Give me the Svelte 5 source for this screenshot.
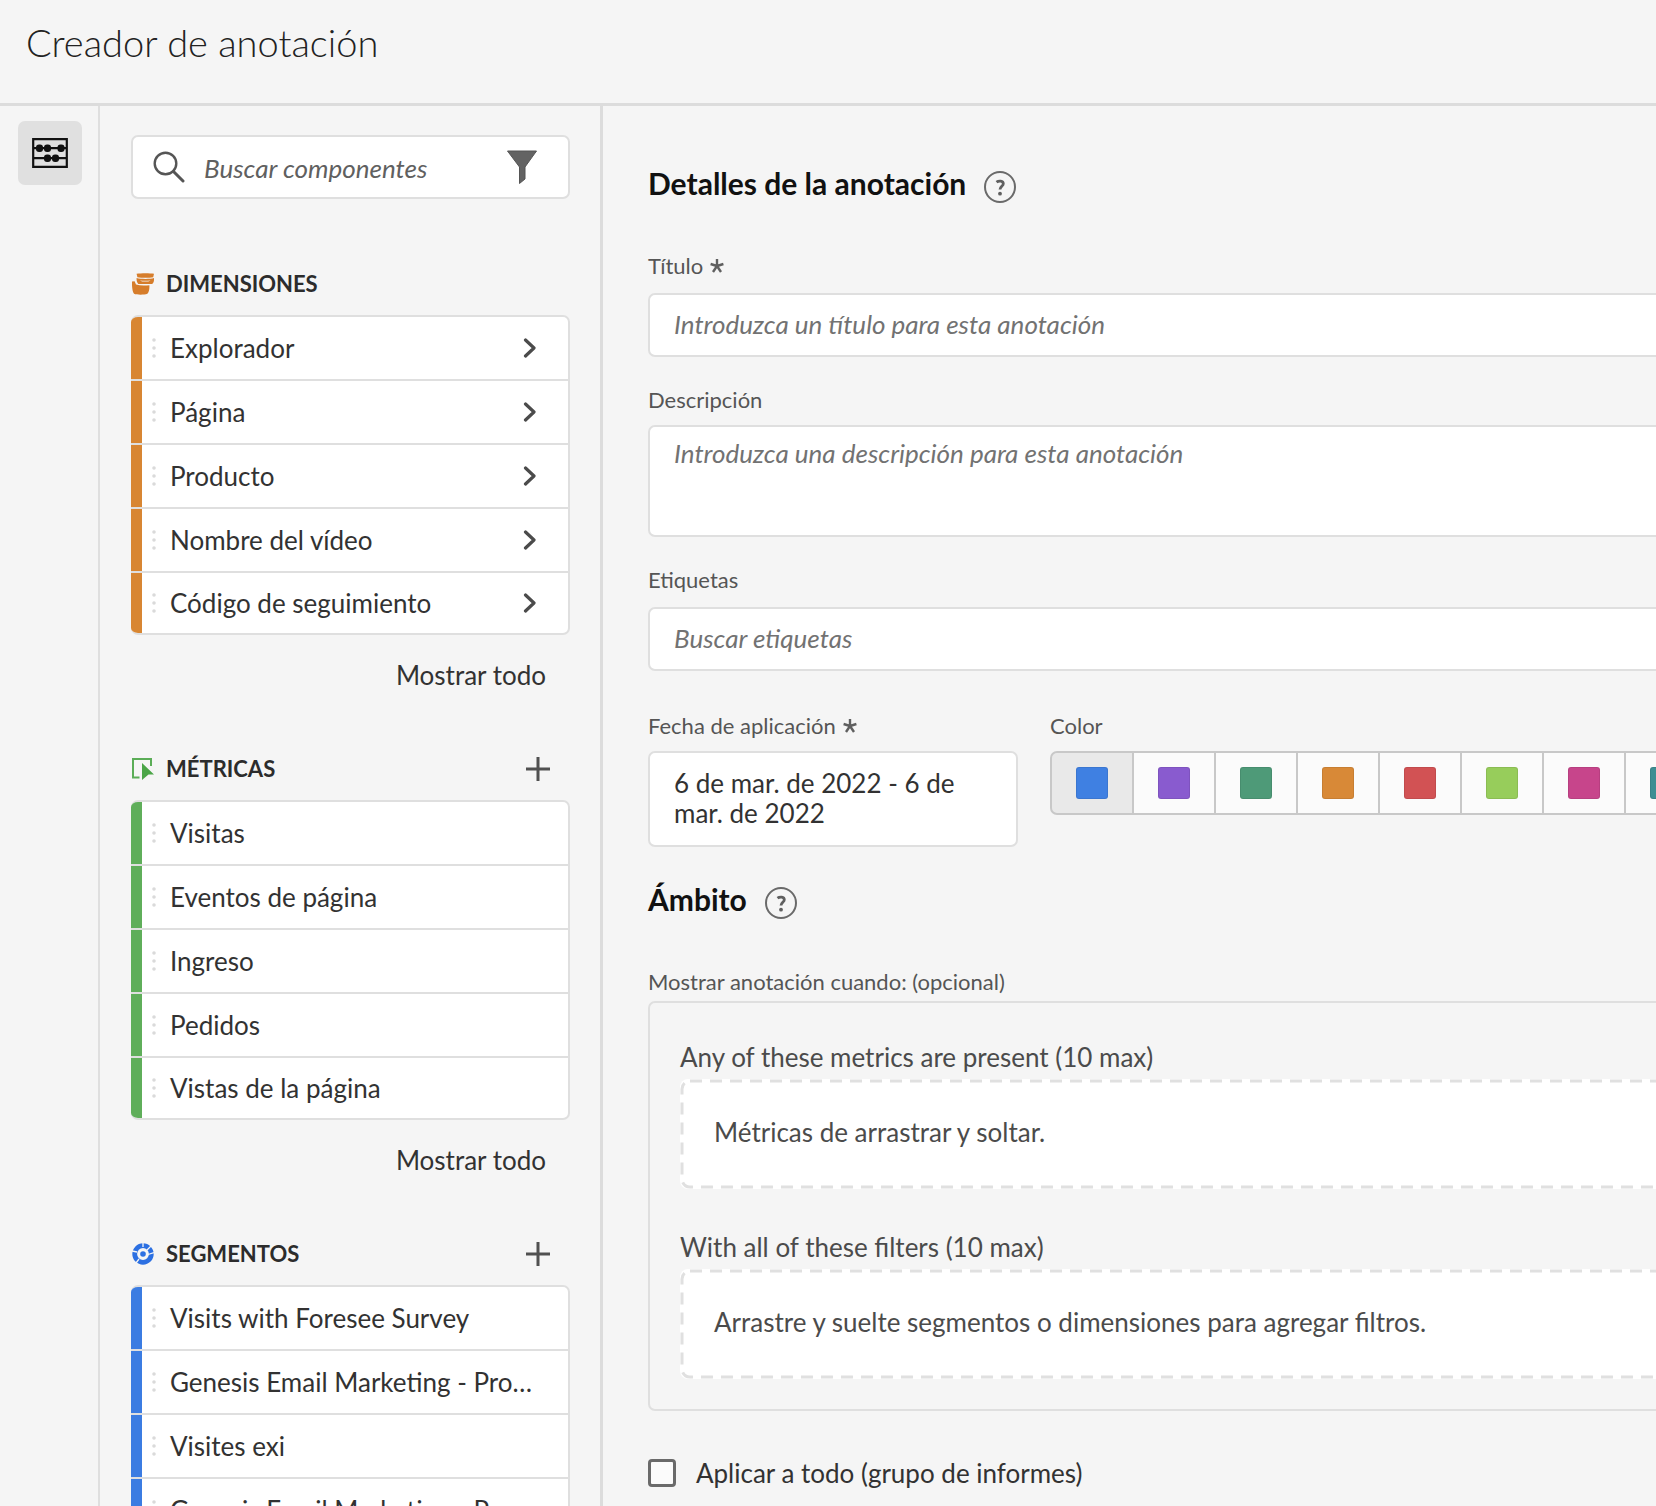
<script>
  let selected = $state('#3f80e2');
  let applyAll = $state(false);

  const groups = [
    {
      id: 'dimensions',
      title: 'DIMENSIONES',
      kind: 'orange',
      nested: true,
      items: ['Explorador', 'Página', 'Producto', 'Nombre del vídeo', 'Código de seguimiento']
    },
    {
      id: 'metrics',
      title: 'MÉTRICAS',
      kind: 'green',
      nested: false,
      items: ['Visitas', 'Eventos de página', 'Ingreso', 'Pedidos', 'Vistas de la página']
    },
    {
      id: 'segments',
      title: 'SEGMENTOS',
      kind: 'blue',
      nested: false,
      items: ['Visits with Foresee Survey', 'Genesis Email Marketing - Pro…', 'Visites exi', 'Genesis Email Marketing - Pr…']
    }
  ];

  const colors = [
    { name: 'Azul', value: '#3f80e2' },
    { name: 'Morado', value: '#895bcf' },
    { name: 'Verde', value: '#4e9a78' },
    { name: 'Naranja', value: '#d88937' },
    { name: 'Rojo', value: '#d25254' },
    { name: 'Lima', value: '#97cd5b' },
    { name: 'Magenta', value: '#c7458b' },
    { name: 'Turquesa', value: '#3d8e93' }
  ];

  const zones = [
    { title: 'Any of these metrics are present (10 max)', hint: 'Métricas de arrastrar y soltar.' },
    { title: 'With all of these filters (10 max)', hint: 'Arrastre y suelte segmentos o dimensiones para agregar filtros.' }
  ];
</script>

{#snippet help(label)}
  <button type="button" class="help" aria-label={label}>
    <svg viewBox="0 0 32 32" width="32" height="32" aria-hidden="true">
      <circle cx="16" cy="16" r="15" fill="none" stroke="#6a6a6a" stroke-width="2" />
      <path d="M12.5 11.2C14.8 9.4 19.3 9.6 19.3 12.7C19.3 15.2 16 15.5 16 18.6" fill="none" stroke="#5f5f5f" stroke-width="2.8" />
      <circle cx="16" cy="22.7" r="1.9" fill="#5f5f5f" />
    </svg>
  </button>
{/snippet}

{#snippet star()}
  <svg class="star" viewBox="0 0 16 16" width="16" height="16" role="img" aria-label="obligatorio">
    <path d="M8 1V8M8 8L1.6 6M8 8L14.4 6M8 8L4 14M8 8L12 14" fill="none" stroke="#5f5f5f" stroke-width="2.4" />
  </svg>
{/snippet}

<div class="app">
  <header class="top"><h1>Creador de anotación</h1></header>

  <div class="body">
    <nav class="rail" aria-label="Paneles">
      <button type="button" class="tool" aria-label="Componentes" aria-pressed="true">
        <svg viewBox="0 0 36 30" width="36" height="30" aria-hidden="true">
          <path d="M1.2 1.2H34.8V28.8H1.2ZM1.2 10.2H34.8M1.2 20.2H34.8" fill="none" stroke="#111" stroke-width="2.2" />
          <g fill="#111">
            <rect x="4" y="6.6" width="7" height="7.4" rx="3" /><rect x="12" y="6.6" width="7" height="7.4" rx="3" />
            <rect x="25.5" y="6.6" width="7" height="7.4" rx="3" /><rect x="12" y="16.6" width="7" height="7.4" rx="3" />
            <rect x="20" y="16.6" width="7" height="7.4" rx="3" />
          </g>
        </svg>
      </button>
    </nav>

    <aside class="side">
      <div class="search">
        <svg viewBox="0 0 32 32" width="32" height="32" aria-hidden="true">
          <circle cx="12.5" cy="12.5" r="10.8" fill="none" stroke="#555" stroke-width="2.4" />
          <path d="M20.5 20.5L30 30" stroke="#555" stroke-width="3" stroke-linecap="round" />
        </svg>
        <input type="text" placeholder="Buscar componentes" aria-label="Buscar componentes" />
        <button type="button" class="filter" aria-label="Filtrar">
          <svg viewBox="0 0 30 34" width="30" height="34" aria-hidden="true">
            <path d="M0.5 1H29.5L18 17V29L12.5 33.5V17Z" fill="#636363" stroke="#555" />
          </svg>
        </button>
      </div>

      {#each groups as g (g.id)}
        <section class="group {g.kind}">
          <div class="group-head">
            {#if g.id === 'dimensions'}
              <svg viewBox="0 0 22 22" width="22" height="22" aria-hidden="true" fill="#d67d2b">
                <path d="M4.6 0.8C9 0 18 0 22 0.8L21.2 4.2C17 5 10 5 5.4 4.2Z" />
                <path fill-rule="evenodd" d="M4.6 5C9 6.2 18 6.2 22 5C22.3 7.5 21.6 9.8 20.2 11H6.4C5 9.6 4.4 7.4 4.6 5ZM8 7.4C10 9 16.500 9 18.500 7.400C15 7.900 11 7.900 8 7.400Z" />
                <path d="M0 8.600L2.600 8.200L4 11.600C8 12.800 13 12.800 17.400 12.200C17.600 16 17 19 15.400 20.800C12 22 5 22 2 20.800C0.300 18.600 -0.200 13 0 8.600Z" />
              </svg>
            {:else if g.id === 'metrics'}
              <svg viewBox="0 0 22 22" width="22" height="22" aria-hidden="true">
                <path d="M7.500 19.500H1V1H19V8M5 19.500" fill="none" stroke="#5bad57" stroke-width="2" />
                <path d="M10 5L22 16.500H16.500L10 22Z" fill="#4ba547" />
              </svg>
            {:else}
              <svg viewBox="0 0 22 22" width="22" height="22" aria-hidden="true">
                <circle cx="11" cy="11" r="8.300" fill="none" stroke="#2c70e2" stroke-width="4.800" />
                <path d="M11 4V0M15 7L20 2M16 11.500L22 9.500M7 16L4 20M5 9L0 8" stroke="#f5f5f5" stroke-width="1.300" />
                <circle cx="11" cy="11" r="2.800" fill="#2c70e2" />
              </svg>
            {/if}
            <h2>{g.title}</h2>
            {#if !g.nested}
              <button type="button" class="add" aria-label="Agregar">
                <svg viewBox="0 0 24 24" width="24" height="24" aria-hidden="true">
                  <path d="M12 0V24M0 12H24" stroke="#505050" stroke-width="3" />
                </svg>
              </button>
            {/if}
          </div>
          <ul>
            {#each g.items as item}
              <li>
                <span class="bar"></span>
                <svg class="grip" viewBox="0 0 4 20" width="4" height="20" aria-hidden="true" fill="#dadada">
                  <circle cx="2" cy="2" r="1.800" /><circle cx="2" cy="10" r="1.800" /><circle cx="2" cy="18" r="1.800" />
                </svg>
                <span class="name">{item}</span>
                {#if g.nested}
                  <button type="button" class="open" aria-label="Abrir {item}">
                    <svg viewBox="0 0 14 20" width="14" height="20" aria-hidden="true">
                      <path d="M2.500 2L11 10L2.500 18" fill="none" stroke="#4b4b4b" stroke-width="3.200" stroke-linecap="round" stroke-linejoin="round" />
                    </svg>
                  </button>
                {/if}
              </li>
            {/each}
          </ul>
          <button type="button" class="more">Mostrar todo</button>
        </section>
      {/each}
    </aside>

    <main>
      <form>
        <div class="heading"><h2>Detalles de la anotación</h2>{@render help('Ayuda sobre los detalles')}</div>

        <div class="field title">
          <label for="title">Título {@render star()}</label>
          <input id="title" type="text" placeholder="Introduzca un título para esta anotación" />
        </div>
        <div class="field description">
          <label for="description">Descripción</label>
          <textarea id="description" placeholder="Introduzca una descripción para esta anotación"></textarea>
        </div>
        <div class="field tags">
          <label for="tags">Etiquetas</label>
          <input id="tags" type="text" placeholder="Buscar etiquetas" />
        </div>

        <div class="pair">
          <div class="field date">
            <label for="date">Fecha de aplicación {@render star()}</label>
            <button id="date" type="button">6 de mar. de 2022 - 6 de mar. de 2022</button>
          </div>
          <fieldset class="field color">
            <legend>Color</legend>
            <div class="swatches">
              {#each colors as c}
                <label class:on={selected === c.value}>
                  <input type="radio" name="color" value={c.value} bind:group={selected} aria-label={c.name} style:background-color={c.value} />
                </label>
              {/each}
            </div>
          </fieldset>
        </div>

        <div class="heading scope"><h2>Ámbito</h2>{@render help('Ayuda sobre el ámbito')}</div>
        <p class="caption">Mostrar anotación cuando: (opcional)</p>
        <div class="rules">
          {#each zones as z}
            <section>
              <h3>{z.title}</h3>
              <div class="drop">
                <svg class="outline" aria-hidden="true"><rect x="2" y="2" rx="8" /></svg>
                <span>{z.hint}</span>
              </div>
            </section>
          {/each}
        </div>

        <label class="check">
          <input type="checkbox" bind:checked={applyAll} />
          <span>Aplicar a todo (grupo de informes)</span>
        </label>
      </form>
    </main>
  </div>
</div>

<style>
  :global(body) {
    margin: 0;
  }
  .app,
  .app * {
    box-sizing: border-box;
  }
  .app {
    display: flex;
    flex-direction: column;
    height: 100vh;
    overflow: hidden;
    background: #f5f5f5;
    color: #323232;
    font: 26px/32px Lato, 'Open Sans', sans-serif;
  }
  h1, h2, h3, p, ul, fieldset {
    margin: 0;
    padding: 0;
  }
  button, input, textarea {
    font: inherit;
    color: inherit;
  }
  button {
    padding: 0;
    border: 0;
    background: none;
  }
  svg {
    display: block;
    flex: none;
  }
  .top {
    flex: none;
    height: 106px;
    padding: 18px 26px;
    border-bottom: 3px solid #dcdcdc;
  }
  h1 {
    font-size: 38px;
    line-height: 48px;
    font-weight: 300;
    color: #222;
  }
  .body {
    flex: 1;
    min-height: 0;
    display: grid;
    grid-template-columns: 100px 503px minmax(0, 1fr);
  }
  .rail {
    padding: 15px 16px 0 18px;
    border-right: 2px solid #dfdfdf;
  }
  .tool {
    display: grid;
    place-items: center;
    width: 64px;
    height: 64px;
    border-radius: 7px;
    background: #e0e0e0;
  }
  .side {
    padding: 29px 30px 0 31px;
    border-right: 3px solid #dcdcdc;
    overflow: hidden;
  }
  .search {
    display: flex;
    align-items: center;
    height: 64px;
    padding: 0 31px 0 20px;
    margin-bottom: 69px;
    background: #fff;
    border: 2px solid #dfdfdf;
    border-radius: 7px;
  }
  .search input {
    flex: 1;
    min-width: 0;
    margin-left: 19px;
    padding: 2px 0 0;
    border: 0;
    background: none;
  }
  ::placeholder {
    color: #727272;
    font-style: italic;
    opacity: 1;
  }
  .search ::placeholder {
    color: #606060;
  }
  .group {
    margin-bottom: 62px;
  }
  .group-head {
    display: flex;
    align-items: center;
    gap: 12px;
    height: 32px;
    padding: 0 20px 0 1px;
    margin-bottom: 15px;
  }
  .group-head h2 {
    flex: 1;
    font-size: 22px;
    line-height: 32px;
    font-weight: 700;
    color: #2c2c2c;
  }
  ul {
    list-style: none;
    height: 320px;
    overflow: hidden;
    border: 2px solid #dfdfdf;
    border-left: 0;
    border-radius: 7px;
    background: #fff;
  }
  li {
    display: flex;
    align-items: center;
    height: 64px;
    padding-right: 31px;
    border-bottom: 2px solid #dfdfdf;
  }
  li:nth-child(5) {
    height: 60px;
    border-bottom: 0;
  }
  .bar {
    align-self: stretch;
    width: 11px;
    background: #d88632;
  }
  .green .bar {
    background: #5fae5a;
  }
  .blue .bar {
    background: #3b7ce2;
  }
  .grip {
    margin: 0 14px 0 10px;
  }
  .name {
    flex: 1;
    white-space: nowrap;
  }
  .more {
    display: block;
    margin: 24px 24px 0 auto;
    line-height: 32px;
  }
  main {
    overflow: hidden;
    padding: 60px 0 0 45px;
    color: #4b4b4b;
  }
  form {
    margin-right: -60px;
  }
  .heading {
    display: flex;
    align-items: flex-start;
    gap: 18px;
    height: 37px;
    color: #111;
  }
  .heading h2 {
    font-size: 30px;
    line-height: 34px;
    font-weight: 700;
  }
  .help {
    align-self: flex-end;
  }
  .field label[for],
  legend,
  .caption {
    display: flex;
    align-items: center;
    gap: 6px;
    padding: 0;
    font-size: 22px;
    line-height: 28px;
    color: #555;
  }
  .field > input,
  textarea,
  .date button {
    display: block;
    width: 100%;
    padding: 0 24px;
    background: #fff;
    border: 2px solid #dfdfdf;
    border-radius: 7px;
  }
  .field > input {
    height: 64px;
    padding-bottom: 3px;
  }
  .field.title {
    margin-top: 49px;
  }
  .field.title input {
    margin-top: 13px;
  }
  .field.description {
    margin-top: 29px;
  }
  textarea {
    height: 112px;
    margin-top: 11px;
    padding-top: 10px;
    resize: none;
  }
  .field.tags {
    margin-top: 29px;
  }
  .field.tags input {
    margin-top: 13px;
  }
  .pair {
    display: flex;
    align-items: flex-start;
    gap: 32px;
    margin-top: 41px;
  }
  .date {
    flex: none;
    width: 370px;
  }
  .date button {
    height: 96px;
    margin-top: 11px;
    padding-bottom: 2px;
    line-height: 30px;
    text-align: left;
    color: #323232;
  }
  .color {
    border: 0;
    min-width: 0;
  }
  .swatches {
    display: flex;
    margin-top: 11px;
  }
  .swatches label {
    flex: none;
    display: grid;
    place-items: center;
    width: 84px;
    height: 64px;
    margin-right: -2px;
    background: #fbfbfb;
    border: 2px solid #c8c8c8;
  }
  .swatches label:first-child {
    border-radius: 7px 0 0 7px;
  }
  .swatches label.on {
    background: #e9e9e9;
  }
  .swatches input {
    appearance: none;
    width: 32px;
    height: 32px;
    margin: 0;
    border: 1px solid rgb(0 0 0 / 8%);
    border-radius: 3px;
  }
  .scope {
    margin-top: 35px;
  }
  .caption {
    margin-top: 49px;
  }
  .rules {
    display: grid;
    gap: 42px;
    margin-top: 5px;
    padding: 38px 30px 30px;
    border: 2px solid #dfdfdf;
    border-radius: 7px;
  }
  h3 {
    font-size: 26px;
    line-height: 32px;
    font-weight: 400;
    margin-bottom: 6px;
  }
  .drop {
    position: relative;
    display: flex;
    align-items: center;
    height: 110px;
    padding: 0 34px 4px;
    background: #fff;
    border-radius: 8px;
  }
  .outline {
    position: absolute;
    inset: 0;
    width: 100%;
    height: 100%;
  }
  .outline rect {
    width: calc(100% - 4px);
    height: calc(100% - 4px);
    fill: none;
    stroke: #e0e0e0;
    stroke-width: 3px;
    stroke-dasharray: 12 8;
  }
  .check {
    display: flex;
    align-items: center;
    gap: 20px;
    margin-top: 46px;
    color: #323232;
  }
  .check input {
    appearance: none;
    width: 28px;
    height: 28px;
    margin: 0;
    background: #fbfbfb;
    border: 3px solid #6a6a6a;
    border-radius: 4px;
  }
</style>
